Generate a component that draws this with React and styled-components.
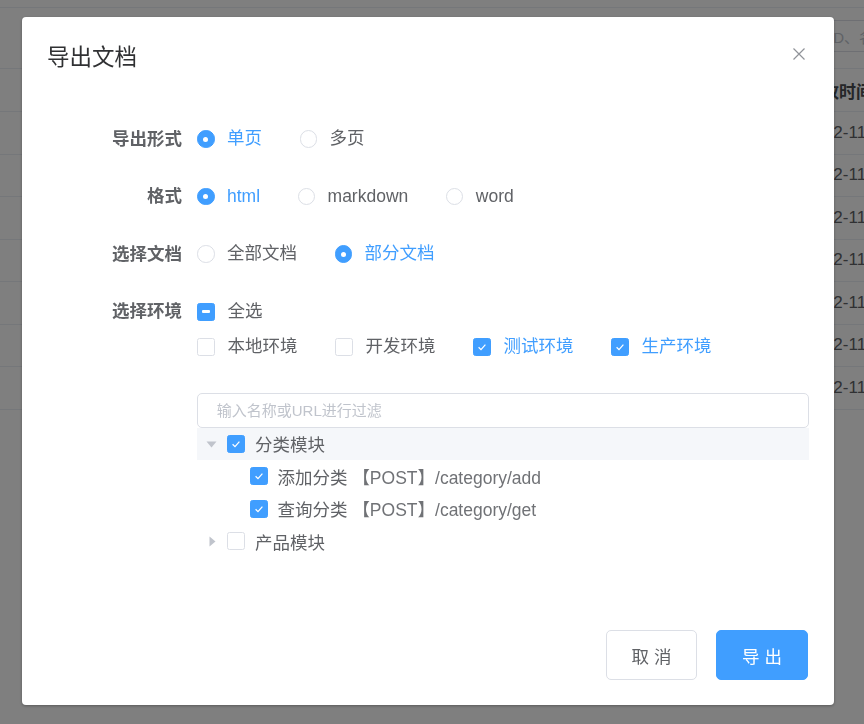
import React from "react";
import styled, { createGlobalStyle } from "styled-components";

const FONT = `"Liberation Sans", "Noto Sans CJK SC", sans-serif`;
const BLUE = "#409EFF";

const Global = createGlobalStyle`
  html, body { margin: 0; padding: 0; }
  body {
    width: 864px;
    height: 724px;
    overflow: hidden;
    background: #fff;
    font-family: ${FONT};
  }
  * { box-sizing: border-box; }
`;

/* ---------- background page ---------- */
const Page = styled.div`
  width: 864px;
  height: 724px;
  overflow: hidden;
  background: #fff;
`;
const NavLine = styled.div`
  height: 8px;
  border-bottom: 1px solid #ebeef5;
`;
const Toolbar = styled.div`
  height: 60px;
  display: flex;
  align-items: center;
  justify-content: flex-end;
`;
const Search = styled.div`
  flex-shrink: 0;
  width: 250px;
  height: 32px;
  margin-right: -201px;
  margin-top: -4px;
  border: 1px solid #dcdfe6;
  border-radius: 4px;
  padding-left: 13px;
  display: flex;
  align-items: center;
  font-size: 15px;
  color: #c0c4cc;
  white-space: nowrap;
`;
const Table = styled.div`
  border-top: 1px solid #ebeef5;
`;
const TRow = styled.div`
  display: grid;
  grid-template-columns: 805px 1fr;
  align-items: center;
  height: ${(p) => (p.$head ? 43 : 42.5)}px;
  border-bottom: 1px solid #ebeef5;
  font-size: 17px;
  white-space: nowrap;
  color: ${(p) => (p.$head ? "#4a4c50" : "#606266")};
  font-weight: ${(p) => (p.$head ? 700 : 400)};
`;
const Cell = styled.div`
  overflow: hidden;
`;

const Overlay = styled.div`
  position: fixed;
  inset: 0;
  background: rgba(0, 0, 0, 0.5);
`;

/* ---------- dialog ---------- */
const Dialog = styled.div`
  position: fixed;
  left: 22px;
  top: 17px;
  width: 812px;
  background: #fff;
  border-radius: 4px;
  box-shadow: 0 1px 3px rgba(0, 0, 0, 0.3);
  display: flex;
  flex-direction: column;
`;
const Header = styled.div`
  position: relative;
  padding: 26px 25px 11.5px;
`;
const Title = styled.div`
  font-size: 22.5px;
  line-height: 30px;
  color: #303133;
`;
const CloseBtn = styled.button`
  position: absolute;
  top: 27px;
  right: 25px;
  width: 20px;
  height: 20px;
  padding: 0;
  border: none;
  background: transparent;
  display: flex;
  align-items: center;
  justify-content: center;
  cursor: pointer;
`;
const Body = styled.div`
  padding: 37px 25px 37.5px;
`;
const FormItem = styled.div`
  display: flex;
  align-items: flex-start;
  margin-bottom: 22.5px;
  padding-top: ${(p) => p.$pt || 0}px;
`;
const Label = styled.div`
  flex-shrink: 0;
  width: 150px;
  padding-right: 15px;
  text-align: right;
  line-height: 35px;
  font-size: 17.5px;
  font-weight: 700;
  color: #606266;
`;
const Content = styled.div`
  flex: 1;
  min-width: 0;
  display: flex;
  flex-direction: column;
`;
const Line = styled.div`
  display: flex;
  align-items: center;
  height: 35px;
`;

const RadioWrap = styled.label`
  display: inline-flex;
  align-items: center;
  margin-right: 37.5px;
  font-size: 17.5px;
  color: ${(p) => (p.$on ? BLUE : "#606266")};
  cursor: pointer;
  white-space: nowrap;
`;
const RadioCircle = styled.span`
  width: 17.5px;
  height: 17.5px;
  border-radius: 50%;
  border: 1.25px solid ${(p) => (p.$on ? BLUE : "#dcdfe6")};
  background: ${(p) => (p.$on ? BLUE : "#fff")};
  display: inline-flex;
  align-items: center;
  justify-content: center;
  flex-shrink: 0;
  &::after {
    content: "";
    width: 5px;
    height: 5px;
    border-radius: 50%;
    background: #fff;
    display: ${(p) => (p.$on ? "block" : "none")};
  }
`;
const ItemText = styled.span`
  padding-left: 12.5px;
  line-height: 1;
`;

const CheckWrap = styled.label`
  display: inline-flex;
  align-items: center;
  margin-right: ${(p) => (p.$mr !== undefined ? p.$mr : 37.5)}px;
  font-size: 17.5px;
  color: ${(p) => (p.$blue ? BLUE : "#606266")};
  cursor: pointer;
  white-space: nowrap;
`;
const Box = styled.span`
  width: 18px;
  height: 18px;
  border-radius: 2.5px;
  border: 1.25px solid ${(p) => (p.$on ? BLUE : "#dcdfe6")};
  background: ${(p) => (p.$on ? BLUE : "#fff")};
  display: inline-flex;
  align-items: center;
  justify-content: center;
  flex-shrink: 0;
`;
const Dash = styled.span`
  width: 8px;
  height: 2.5px;
  background: #fff;
  border-radius: 1px;
`;

const FilterInput = styled.input`
  width: 100%;
  height: 35px;
  border: 1px solid #dcdfe6;
  border-radius: 5px;
  padding: 0 18.75px;
  font-family: ${FONT};
  font-size: 15px;
  color: #606266;
  outline: none;
  &::placeholder {
    color: #c0c4cc;
  }
`;
const Tree = styled.div`
  display: flex;
  flex-direction: column;
`;
const Node = styled.div`
  display: flex;
  align-items: center;
  height: 32.5px;
  padding-left: ${(p) => p.$level * 22.5}px;
  background: ${(p) => (p.$current ? "#f5f7fa" : "transparent")};
  font-size: 17.5px;
  color: #606266;
  white-space: nowrap;
`;
const Expander = styled.span`
  width: 30px;
  height: 30px;
  display: inline-flex;
  align-items: center;
  justify-content: center;
  visibility: ${(p) => (p.$hidden ? "hidden" : "visible")};
  transform: ${(p) => (p.$open ? "rotate(90deg)" : "none")};
`;
const NodeText = styled.span`
  padding-left: 10px;
`;
const Path = styled.span`
  color: #707276;
`;

const Footer = styled.div`
  padding: 12.5px 26px 25px 25px;
  display: flex;
  justify-content: flex-end;
  gap: 19px;
`;
const Button = styled.button`
  width: ${(p) => (p.$primary ? 92 : 91)}px;
  height: 50px;
  border-radius: 5px;
  border: 1px solid ${(p) => (p.$primary ? BLUE : "#dcdfe6")};
  background: ${(p) => (p.$primary ? BLUE : "#fff")};
  color: ${(p) => (p.$primary ? "#fff" : "#606266")};
  font-family: ${FONT};
  font-size: 17.5px;
  cursor: pointer;
  white-space: pre;
`;

/* ---------- icons ---------- */
const CloseIcon = () => (
  <svg width="14" height="14" viewBox="0 0 14 14">
    <path d="M1.5 1.5 L12.5 12.5 M12.5 1.5 L1.5 12.5" stroke="#909399" strokeWidth="1.2" fill="none" />
  </svg>
);
const CheckIcon = () => (
  <svg width="14" height="14" viewBox="0 0 14 14">
    <path d="M3.6 7.2 L6 9.6 L10.4 4.6" stroke="#fff" strokeWidth="1.25" fill="none" />
  </svg>
);
const Caret = () => (
  <svg width="7" height="11" viewBox="0 0 7 11">
    <path d="M0.5 0.5 L6.5 5.5 L0.5 10.5 Z" fill="#c0c4cc" />
  </svg>
);

/* ---------- pieces ---------- */
const Radio = ({ on, children }) => (
  <RadioWrap $on={on}>
    <RadioCircle $on={on} />
    <ItemText>{children}</ItemText>
  </RadioWrap>
);

const Check = ({ state, children, blue, mr }) => (
  <CheckWrap $blue={blue} $mr={mr}>
    <Box $on={state !== "off"}>
      {state === "on" && <CheckIcon />}
      {state === "half" && <Dash />}
    </Box>
    {children !== undefined && <ItemText>{children}</ItemText>}
  </CheckWrap>
);

const TreeNode = ({ level, expander, open, state, current, children }) => (
  <Node $level={level} $current={current}>
    <Expander $hidden={!expander} $open={open}>
      <Caret />
    </Expander>
    <Check state={state} mr={0} />
    <NodeText>{children}</NodeText>
  </Node>
);

const rows = Array.from({ length: 7 }, (_, i) => `2022-11-${String(28 - i).padStart(2, "0")} 10:2${i}:00`);

export default function App() {
  return (
    <>
      <Global />
      <Page>
        <NavLine />
        <Toolbar>
          <Search>ID、名称/URL</Search>
        </Toolbar>
        <Table>
          <TRow $head>
            <Cell />
            <Cell>修改时间</Cell>
          </TRow>
          {rows.map((d) => (
            <TRow key={d}>
              <Cell />
              <Cell>{d}</Cell>
            </TRow>
          ))}
        </Table>
      </Page>
      <Overlay />
      <Dialog>
        <Header>
          <Title>导出文档</Title>
          <CloseBtn aria-label="关闭">
            <CloseIcon />
          </CloseBtn>
        </Header>
        <Body>
          <FormItem>
            <Label>导出形式</Label>
            <Content>
              <Line>
                <Radio on>单页</Radio>
                <Radio>多页</Radio>
              </Line>
            </Content>
          </FormItem>
          <FormItem>
            <Label>格式</Label>
            <Content>
              <Line>
                <Radio on>html</Radio>
                <Radio>markdown</Radio>
                <Radio>word</Radio>
              </Line>
            </Content>
          </FormItem>
          <FormItem>
            <Label>选择文档</Label>
            <Content>
              <Line>
                <Radio>全部文档</Radio>
                <Radio on>部分文档</Radio>
              </Line>
            </Content>
          </FormItem>
          <FormItem>
            <Label>选择环境</Label>
            <Content>
              <Line>
                <Check state="half">全选</Check>
              </Line>
              <Line>
                <Check state="off">本地环境</Check>
                <Check state="off">开发环境</Check>
                <Check state="on" blue>测试环境</Check>
                <Check state="on" blue>生产环境</Check>
              </Line>
            </Content>
          </FormItem>
          <FormItem $pt={6}>
            <Label />
            <Content>
              <FilterInput placeholder="输入名称或URL进行过滤" />
              <Tree>
                <TreeNode level={0} expander open state="on" current>
                  分类模块
                </TreeNode>
                <TreeNode level={1} state="on">
                  添加分类 <Path>【POST】/category/add</Path>
                </TreeNode>
                <TreeNode level={1} state="on">
                  查询分类 <Path>【POST】/category/get</Path>
                </TreeNode>
                <TreeNode level={0} expander state="off">
                  产品模块
                </TreeNode>
              </Tree>
            </Content>
          </FormItem>
        </Body>
        <Footer>
          <Button>取 消</Button>
          <Button $primary>导 出</Button>
        </Footer>
      </Dialog>
    </>
  );
}
